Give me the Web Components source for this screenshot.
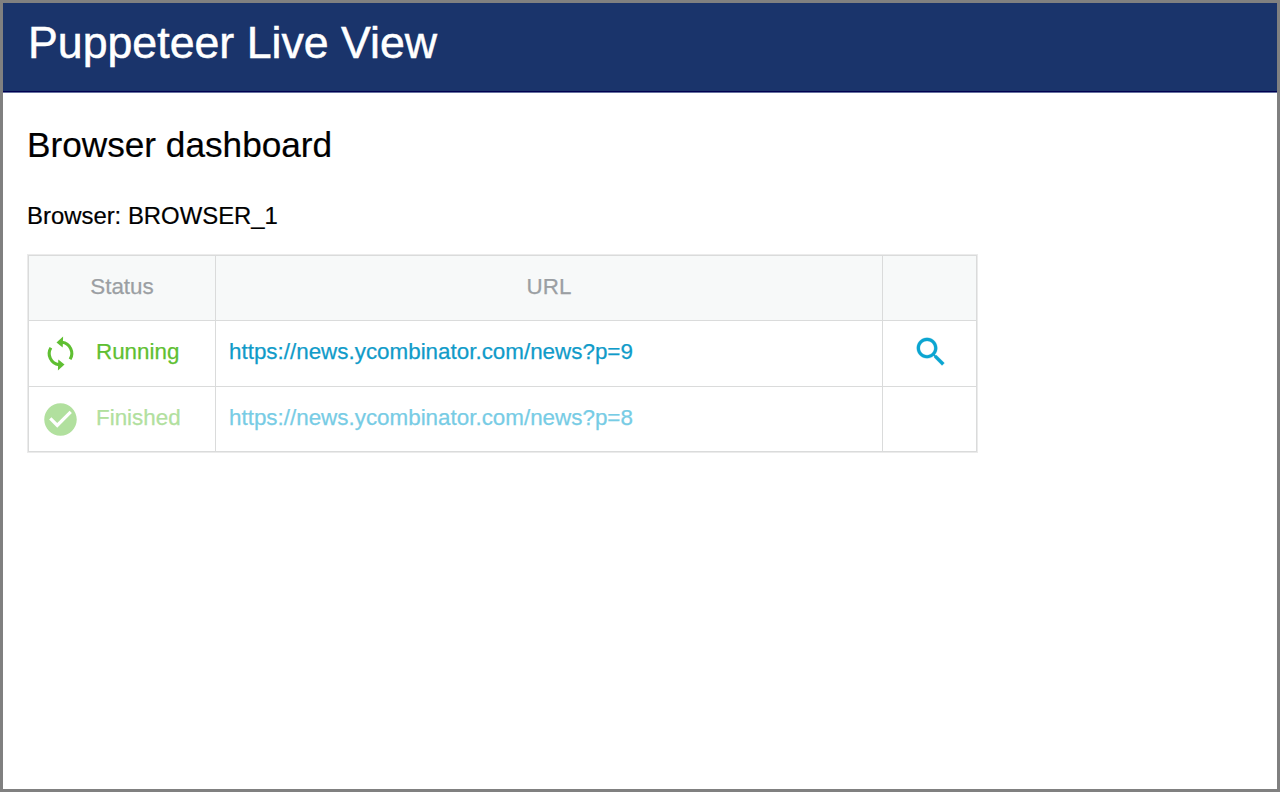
<!DOCTYPE html>
<html lang="en">
<head>
<meta charset="utf-8">
<title>Puppeteer Live View</title>
<style>
html, body { margin: 0; height: 100%; }
body { font-family: "Liberation Sans", Arial, sans-serif; color: #000; background: #fff; }
</style>
</head>
<body>
<live-view>
  <page-header slot="header">Puppeteer Live View</page-header>
  <browser-dashboard heading="Browser dashboard" browser="BROWSER_1">
    <page-row status="running" label="Running" url="https://news.ycombinator.com/news?p=9"></page-row>
    <page-row status="finished" label="Finished" url="https://news.ycombinator.com/news?p=8"></page-row>
  </browser-dashboard>
</live-view>
<script>
class LiveView extends HTMLElement {
  constructor() {
    super();
    this.attachShadow({ mode: "open" }).innerHTML = `
      <style>
        :host { display: flex; flex-direction: column; box-sizing: border-box; height: 100vh; border: 3px solid #808080; overflow: hidden; }
        main { flex: 1; padding: 28px 24px; }
      </style>
      <slot name="header"></slot>
      <main><slot></slot></main>`;
  }
}

class PageHeader extends HTMLElement {
  constructor() {
    super();
    this.attachShadow({ mode: "open" }).innerHTML = `
      <style>
        :host { display: block; box-sizing: border-box; height: 90px; padding: 14px 25px 0; background: #1a346b; border-bottom: 1px solid #6671a0; box-shadow: inset 0 -1px #00004f; color: #fff; }
        h1 { margin: 0; font-size: 44.7px; line-height: 52px; font-weight: 400; white-space: nowrap; -webkit-text-stroke: .5px #fff; }
      </style>
      <h1><slot></slot></h1>`;
  }
}

class BrowserDashboard extends HTMLElement {
  constructor() {
    super();
    this.attachShadow({ mode: "open" }).innerHTML = `
      <style>
        :host { display: block; }
        h2 { margin: 0 0 33px; font-size: 35.2px; line-height: 48px; font-weight: 400; -webkit-text-stroke: .2px; }
        p { margin: 0 0 25px; font-size: 23.9px; line-height: 28px; -webkit-text-stroke: .2px; }
        .table { width: 949px; margin-left: 1px; box-sizing: border-box; border: 1px solid #dadbdb; box-shadow: 0 0 0 1px #ebebeb; font-size: 22.4px; line-height: 26px; -webkit-text-stroke: .25px; }
        .head { display: grid; grid-template-columns: 187px 667px 1fr; height: 64px; background: #f7f9f9; color: #9b9fa3; text-align: center; }
        .head > div { padding-top: 18px; box-sizing: border-box; }
        .head > div:not(:last-child) { border-right: 1px solid #dadbdb; }
      </style>
      <h2></h2>
      <p></p>
      <div class="table">
        <div class="head"><div>Status</div><div>URL</div><div></div></div>
        <slot></slot>
      </div>`;
  }
  connectedCallback() {
    this.shadowRoot.querySelector("h2").textContent = this.getAttribute("heading");
    this.shadowRoot.querySelector("p").textContent = "Browser: " + this.getAttribute("browser");
  }
}

class StatusIcon extends HTMLElement {
  static shapes = {
    running: `<svg viewBox="-19.5 -19.5 39 39">
      <g id="half"><path d="M1.5-11.2A11.2 11.2 0 0 1 9.6 5.8" fill="none" stroke="currentColor" stroke-width="3.1"/><path d="M2.6-16.9L-4-10.9 2.2-6z"/></g>
      <use href="#half" transform="rotate(180)"/></svg>`,
    finished: `<svg viewBox="0 0 24 24"><path d="M12 2C6.48 2 2 6.48 2 12s4.48 10 10 10 10-4.48 10-10S17.52 2 12 2zm-2 15l-5-5 1.41-1.41L10 14.17l7.59-7.59L19 8l-9 9z"/></svg>`,
    search: `<svg viewBox="0 0 24 24"><path stroke="currentColor" stroke-width=".15" d="M15.5 14h-.79l-.28-.27C15.41 12.59 16 11.11 16 9.5 16 5.91 13.09 3 9.5 3S3 5.91 3 9.5 5.91 16 9.5 16c1.61 0 3.09-.59 4.23-1.57l.27.28v.79l5 4.99L20.49 19l-4.99-5zm-6 0C7.01 14 5 11.99 5 9.5S7.01 5 9.5 5 14 7.01 14 9.5 11.99 14 9.5 14z"/></svg>`
  };
  static observedAttributes = ["name"];
  constructor() {
    super();
    this.attachShadow({ mode: "open" });
  }
  attributeChangedCallback(attribute, previous, name) {
    this.shadowRoot.innerHTML = `
      <style>:host { display: block; flex: none; } svg { display: block; width: 100%; height: 100%; fill: currentColor; }</style>
      ${StatusIcon.shapes[name]}`;
  }
}

class PageRow extends HTMLElement {
  constructor() {
    super();
    this.attachShadow({ mode: "open" }).innerHTML = `
      <style>
        :host { display: grid; grid-template-columns: 187px 667px 1fr; box-sizing: border-box; height: 66px; border-top: 1px solid #dadbdb; }
        :host(:last-of-type) { height: 65px; }
        div { display: flex; align-items: flex-start; box-sizing: border-box; }
        div:not(:last-child) { border-right: 1px solid #dadbdb; }
        .status { padding: 13px 0 0 12px; gap: 16px; color: #5fbf32; }
        .status status-icon { width: 39px; height: 39px; }
        .status span { padding-top: 5px; }
        span, a { white-space: nowrap; }
        .url { padding: 18px 0 0 13px; }
        a { color: #109bc9; text-decoration: none; }
        .view { justify-content: center; padding: 12px 0 0 2px; color: #0ba5d1; }
        .view status-icon { width: 38px; height: 38px; }
        :host([status="finished"]) .status { color: #b1e09e; }
        :host([status="finished"]) a { color: #77cce5; }
      </style>
      <div class="status"><status-icon></status-icon><span></span></div>
      <div class="url"><a></a></div>
      <div class="view"></div>`;
  }
  connectedCallback() {
    const root = this.shadowRoot, status = this.getAttribute("status");
    root.querySelector("status-icon").setAttribute("name", status);
    root.querySelector("span").textContent = this.getAttribute("label");
    const link = root.querySelector("a");
    link.textContent = link.href = this.getAttribute("url");
    if (status === "running") root.querySelector(".view").innerHTML = '<status-icon name="search"></status-icon>';
  }
}

customElements.define("status-icon", StatusIcon);
customElements.define("page-row", PageRow);
customElements.define("browser-dashboard", BrowserDashboard);
customElements.define("page-header", PageHeader);
customElements.define("live-view", LiveView);
</script>
</body>
</html>
